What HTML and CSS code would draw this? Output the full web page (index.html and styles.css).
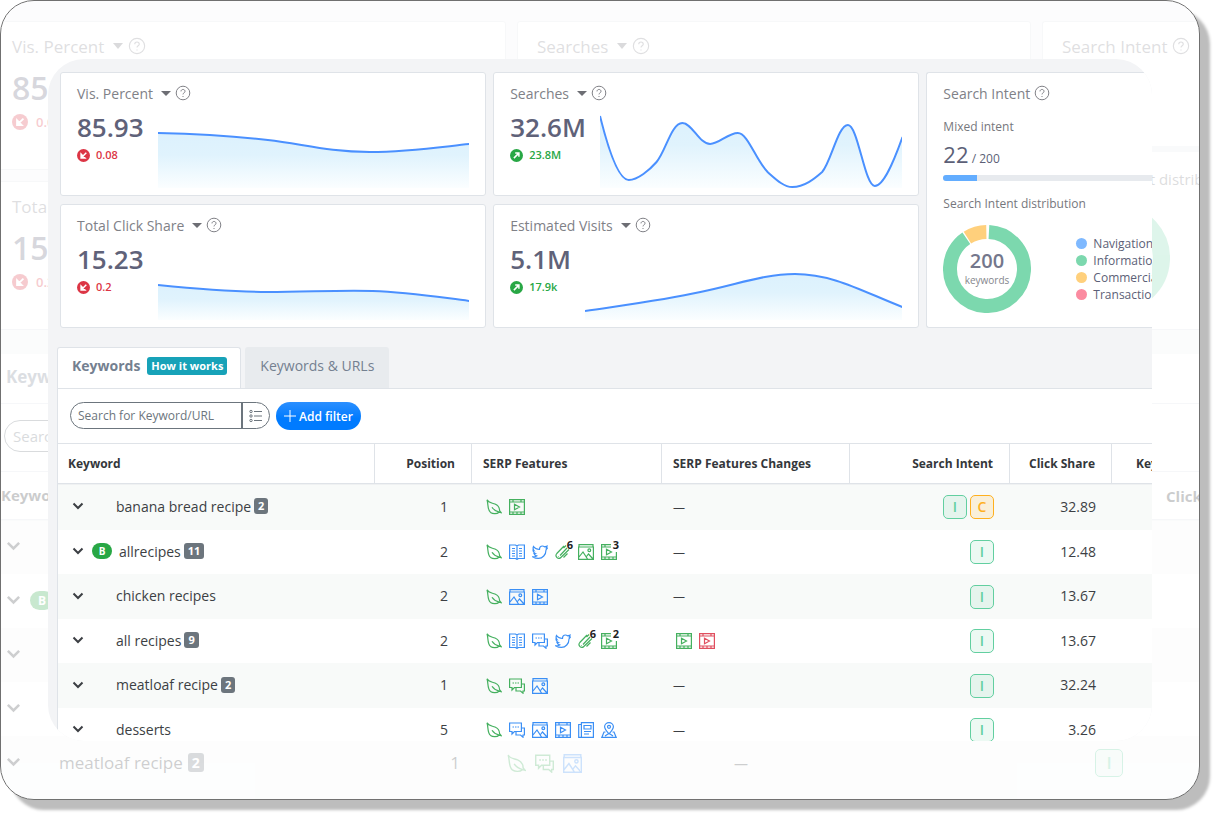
FILE: index.html
```html
<!DOCTYPE html>
<html lang="en">
<head>
    <meta charset="UTF-8">
    <meta name="viewport" content="width=device-width, initial-scale=1.0">
    <title>Keywords</title>
    <link rel="stylesheet" href="styles.css">
</head>
<body>
    <!-- Icon sprite -->
    <svg class="sprite" aria-hidden="true">
        <defs>
            <linearGradient id="area" x1="0" y1="0" x2="0" y2="1">
                <stop offset="0" stop-color="#dcf1fd"/>
                <stop offset="0.4" stop-color="#e0f3fd"/>
                <stop offset="1" stop-color="#fbfeff"/>
            </linearGradient>
        </defs>
        <symbol id="help" viewBox="0 0 16 16"><circle cx="8" cy="8" r="6.8"/><path d="M6 6.4c0-2.6 4-2.6 4 0 0 1.500-2 1.400-2 3M8 11v1"/></symbol>
        <symbol id="down" viewBox="0 0 14 14"><circle cx="7" cy="7" r="7" fill="currentColor" stroke="none"/><path d="M10 4L6 8M4.400 5.500v4.100h4.100z" stroke="#fff" stroke-width="1.600" fill="#fff"/></symbol>
        <symbol id="up" viewBox="0 0 14 14"><circle cx="7" cy="7" r="7" fill="currentColor" stroke="none"/><path d="M4.200 9.800L9 5M5.600 4.400h4v4" stroke="#fff" stroke-width="1.600"/></symbol>
        <symbol id="chevron" viewBox="0 0 12 8"><path d="M1.500 1.500L6 6l4.500-4.500" stroke-width="2"/></symbol>
        <symbol id="list" viewBox="0 0 14 14"><path d="M5 2.500h8M5 7h8M5 11.500h8"/><circle cx="2" cy="2.500" r="1.200"/><circle cx="2" cy="7" r="1.200"/><circle cx="2" cy="11.500" r="1.200"/></symbol>
        <symbol id="leaf" viewBox="0 0 16 16"><path d="M1 .8C2.500 4 6 3.800 9 5c3.500 1.400 4.500 4 4.600 6.700l1.600 2-2.200-.5c-2 1.800-6 2-8.500.2C1.200 10.700 2.500 5.500 1 .8zM6 8.300c1.800 2.800 4 4 7.200 4.900"/></symbol>
        <symbol id="video" viewBox="0 0 16 16"><path d="M.6.6h14.800v14.800H.6zM.6 3h14.800M.6 13h14.800M4 .6V3M12 .6V3M4 13v2.400M12 13v2.400M8 13v2.400M5.500 5.200v5.600L10.500 8z"/></symbol>
        <symbol id="videocut" viewBox="0 0 16 16"><path d="M10 .6H.6v14.800h14.800V8M.6 3H10M.6 13h14.800M4 .6V3M4 13v2.400M12 13v2.400M8 13v2.400M5.500 5.200v5.600L10.500 8z"/></symbol>
        <symbol id="book" viewBox="0 0 16 16"><path d="M.6 1h5.900L8 2l1.500-1h5.900v13.500H9.500L8 15.400l-1.500-.9H.6zM8 2v13M3 4.500h3M3 7h3M3 9.500h3M3 12h3M10 4.500h3M10 7h3M10 9.500h3M10 12h3"/></symbol>
        <symbol id="bird" viewBox="0 0 16 16"><path d="M1.500 2.500c1.500 2 3.500 3 6 3 0-2 1-3.500 3-3.500 1 0 1.500.4 2 .8L15 2.200l-.8 1.700 1.200.1-1.400 1.900c0 5-3.500 8.500-7.500 8.500-2.500 0-4-.5-5.500-1.500 1.600 0 2.600-.3 3.600-1C3 11.500 2.300 10.500 2 9.500h1.200C1.500 8.500 1 7.500 1 6.200l1 .3C.8 5 .8 4 1.500 2.500z"/></symbol>
        <symbol id="links" viewBox="0 0 16 16"><path d="M9 2L1.800 9.500c-2.400 3 1.500 6.500 4 4L14 5.500M5 11.500L12 4M3 12.500l.6.300M8.500 13.500l4-4M11 1.500L8.500 4"/></symbol>
        <symbol id="image" viewBox="0 0 16 16"><path d="M.6 3h14.800v12.400H.6zM1 .6h14v2.400H1zM1 13l4-5 4.500 7M8.500 12.500l2-2.500 4.500 5"/><circle cx="11.300" cy="6.200" r="1.400"/></symbol>
        <symbol id="chat" viewBox="0 0 16 16"><path d="M.6 1h11.800v8.500H5.500L3 12V9.500H.6zM12.400 6h3v7H14v2.200L11.500 13H7V9.500M3.500 5h1.500M6 5h1.500M8.500 5H10"/></symbol>
        <symbol id="news" viewBox="0 0 16 16"><path d="M3.400.6h12v14.800h-12zM3.400 2.500H.7v12.900h3M6 3.500h7v3.500H6zM6 9.500h7M6 12h5"/></symbol>
        <symbol id="pin" viewBox="0 0 16 16"><path d="M8 12C5 8.500 3.600 7 3.600 4.800a4.400 4.200 0 0 1 8.800 0C12.400 7 11 8.500 8 12zM4.500 10H3L.8 15.400h14.400L13 10h-1.500M4 14l3-2M9 12l3 2"/><circle cx="8" cy="4.800" r="1.500"/></symbol>
    </svg>

    <div class="frame">
        <!-- Faded copy behind the panel -->
        <div class="backdrop" aria-hidden="true" inert>
            <div class="cards">
                <div class="card">
                    <div class="card-title"><span class="picker">Vis. Percent</span><svg class="help"><use href="#help"/></svg></div>
                    <div class="stats"><div class="value">85.93</div><div class="delta down"><svg><use href="#down"/></svg>0.08</div></div>
                </div>
                <div class="card">
                    <div class="card-title"><span class="picker">Searches</span><svg class="help"><use href="#help"/></svg></div>
                </div>
                <div class="card intent-card">
                    <div class="card-title">Search Intent<svg class="help"><use href="#help"/></svg></div>
                    <div class="label">Mixed intent</div>
                    <div class="mixed"><span class="mixed-count">22</span> / 200</div>
                    <div class="progress"><div class="progress-fill"></div></div>
                    <div class="label">Search Intent distribution</div>
                    <svg class="donut" viewBox="0 0 88 88"><circle class="arc info" cx="44" cy="44" r="37" pathLength="360"/></svg>
                </div>
                <div class="card">
                    <div class="card-title"><span class="picker">Total Click Share</span><svg class="help"><use href="#help"/></svg></div>
                    <div class="stats"><div class="value">15.23</div><div class="delta down"><svg><use href="#down"/></svg>0.2</div></div>
                </div>
                <div class="card"></div>
            </div>
            <div class="keywords">
                <div class="tabs"><span class="tab active">Keywords</span></div>
                <div class="toolbar">
                    <div class="search"><input type="text" aria-label="Search" placeholder="Search for Keyword/URL"></div>
                </div>
                <table class="grid">
                    <colgroup><col><col class="c-position"><col class="c-serp"><col class="c-changes"><col class="c-intent"><col class="c-share"></colgroup>
                    <thead>
                        <tr><th>Keyword</th><th></th><th></th><th></th><th></th><th class="cut">Click Share</th></tr>
                    </thead>
                    <tbody>
                        <tr><td><div class="kw"><svg class="chev"><use href="#chevron"/></svg></div></td><td></td><td></td><td></td><td></td><td></td></tr>
                        <tr><td><div class="kw"><svg class="chev"><use href="#chevron"/></svg><span class="brand">B</span></div></td><td></td><td></td><td></td><td></td><td></td></tr>
                        <tr><td><div class="kw"><svg class="chev"><use href="#chevron"/></svg></div></td><td></td><td></td><td></td><td></td><td></td></tr>
                        <tr><td><div class="kw"><svg class="chev"><use href="#chevron"/></svg></div></td><td></td><td></td><td></td><td></td><td></td></tr>
                        <tr>
                            <td><div class="kw"><svg class="chev"><use href="#chevron"/></svg><span class="name">meatloaf recipe</span><span class="count">2</span></div></td>
                            <td class="num pos">1</td>
                            <td><div class="icons"><svg class="green"><use href="#leaf"/></svg><svg class="green"><use href="#chat"/></svg><svg class="blue"><use href="#image"/></svg></div></td>
                            <td class="dash">—</td>
                            <td><div class="intents"><span class="intent">I</span></div></td>
                            <td></td>
                        </tr>
                    </tbody>
                </table>
            </div>
        </div>

        <main class="panel">
            <section class="cards">
                <div class="card">
                    <div class="card-title"><button class="picker">Vis. Percent</button><svg class="help"><use href="#help"/></svg></div>
                    <div class="card-body">
                        <div class="stats"><div class="value">85.93</div><div class="delta down"><svg><use href="#down"/></svg>0.08</div></div>
                        <svg class="chart" viewBox="0 0 312 78" preserveAspectRatio="none">
                            <path class="fill" d="M0 23C40 24 75 26 110 30S170 42 212 42S290 36 312 34V78H0z"/>
                            <path class="line" d="M0 23C40 24 75 26 110 30S170 42 212 42S290 36 312 34"/>
                        </svg>
                    </div>
                </div>
                <div class="card">
                    <div class="card-title"><button class="picker">Searches</button><svg class="help"><use href="#help"/></svg></div>
                    <div class="card-body">
                        <div class="stats"><div class="value">32.6M</div><div class="delta up"><svg><use href="#up"/></svg>23.8M</div></div>
                        <svg class="chart" viewBox="0 0 305 78" preserveAspectRatio="none">
                            <path class="fill" d="M0 6C8 38 18 70 29 70C38 70 50 60 57 52C66 42 72 13 83 13C93 13 100 34 111 34C120 34 129 23 139 23C149 23 157 50 169 62C177 69 185 77 194 77C206 77 216 69 224 62C233 52 240 15 250 15C260 15 267 76 277 76C286 76 296 52 305 27V78H0z"/>
                            <path class="line" d="M0 6C8 38 18 70 29 70C38 70 50 60 57 52C66 42 72 13 83 13C93 13 100 34 111 34C120 34 129 23 139 23C149 23 157 50 169 62C177 69 185 77 194 77C206 77 216 69 224 62C233 52 240 15 250 15C260 15 267 76 277 76C286 76 296 52 305 27"/>
                        </svg>
                    </div>
                </div>
                <div class="card intent-card">
                    <div class="card-title">Search Intent<svg class="help"><use href="#help"/></svg></div>
                    <div class="label">Mixed intent</div>
                    <div class="mixed"><span class="mixed-count">22</span> / 200</div>
                    <div class="progress"><div class="progress-fill"></div></div>
                    <div class="label">Search Intent distribution</div>
                    <div class="distribution">
                        <svg class="donut" viewBox="0 0 88 88">
                            <circle class="arc info" cx="44" cy="44" r="37" pathLength="360"/>
                            <circle class="arc comm" cx="44" cy="44" r="37" pathLength="360"/>
                            <text class="donut-total" x="44" y="43">200</text>
                            <text class="donut-label" x="44" y="59">keywords</text>
                        </svg>
                        <ul class="legend">
                            <li class="navi">Navigational</li>
                            <li class="info">Informational</li>
                            <li class="comm">Commercial</li>
                            <li class="tran">Transactional</li>
                        </ul>
                    </div>
                </div>
                <div class="card">
                    <div class="card-title"><button class="picker">Total Click Share</button><svg class="help"><use href="#help"/></svg></div>
                    <div class="card-body">
                        <div class="stats"><div class="value">15.23</div><div class="delta down"><svg><use href="#down"/></svg>0.2</div></div>
                        <svg class="chart" viewBox="0 0 312 78" preserveAspectRatio="none">
                            <path class="fill" d="M0 43C30 46 70 50 110 50C150 50 180 48 215 49C250 50 280 55 312 59V78H0z"/>
                            <path class="line" d="M0 43C30 46 70 50 110 50C150 50 180 48 215 49C250 50 280 55 312 59"/>
                        </svg>
                    </div>
                </div>
                <div class="card">
                    <div class="card-title"><button class="picker">Estimated Visits</button><svg class="help"><use href="#help"/></svg></div>
                    <div class="card-body">
                        <div class="stats"><div class="value">5.1M</div><div class="delta up"><svg><use href="#up"/></svg>17.9k</div></div>
                        <svg class="chart" viewBox="0 0 319 78" preserveAspectRatio="none">
                            <path class="fill" d="M0 69C40 63 80 58 116 50C155 42 180 32 211 32C250 32 280 50 319 65V78H0z"/>
                            <path class="line" d="M0 69C40 63 80 58 116 50C155 42 180 32 211 32C250 32 280 50 319 65"/>
                        </svg>
                    </div>
                </div>
            </section>

            <section class="keywords">
                <div class="tabs">
                    <a href="#keywords" class="tab active">Keywords<span class="tag">How it works</span></a>
                    <a href="#urls" class="tab">Keywords &amp; URLs</a>
                </div>
                <div class="toolbar">
                    <div class="search">
                        <input type="text" aria-label="Search for Keyword/URL" placeholder="Search for Keyword/URL">
                        <button aria-label="Search list"><svg><use href="#list"/></svg></button>
                    </div>
                    <button class="add"><svg viewBox="0 0 12 12"><path d="M6 0v12M0 6h12"/></svg>Add filter</button>
                </div>
                <table class="grid">
                    <colgroup><col><col class="c-position"><col class="c-serp"><col class="c-changes"><col class="c-intent"><col class="c-share"><col class="c-last"></colgroup>
                    <thead>
                        <tr>
                            <th>Keyword</th>
                            <th class="num">Position</th>
                            <th>SERP Features</th>
                            <th>SERP Features Changes</th>
                            <th class="num">Search Intent</th>
                            <th class="num">Click Share</th>
                            <th class="cut">Keyword</th>
                        </tr>
                    </thead>
                    <tbody>
                        <tr>
                            <td><div class="kw"><button class="toggle" aria-label="Expand"><svg class="chev"><use href="#chevron"/></svg></button><span class="name">banana bread recipe</span><span class="count">2</span></div></td>
                            <td class="num pos">1</td>
                            <td><div class="icons"><svg class="green"><use href="#leaf"/></svg><svg class="green"><use href="#video"/></svg></div></td>
                            <td class="dash">—</td>
                            <td><div class="intents"><span class="intent">I</span><span class="intent commercial">C</span></div></td>
                            <td class="num">32.89</td>
                            <td></td>
                        </tr>
                        <tr>
                            <td><div class="kw"><button class="toggle" aria-label="Expand"><svg class="chev"><use href="#chevron"/></svg></button><span class="brand">B</span><span class="name">allrecipes</span><span class="count">11</span></div></td>
                            <td class="num pos">2</td>
                            <td><div class="icons"><svg class="green"><use href="#leaf"/></svg><svg class="blue"><use href="#book"/></svg><svg class="blue"><use href="#bird"/></svg><span class="multi"><svg class="green"><use href="#links"/></svg><b>6</b></span><svg class="green"><use href="#image"/></svg><span class="multi"><svg class="green"><use href="#videocut"/></svg><b>3</b></span></div></td>
                            <td class="dash">—</td>
                            <td><div class="intents"><span class="intent">I</span></div></td>
                            <td class="num">12.48</td>
                            <td></td>
                        </tr>
                        <tr>
                            <td><div class="kw"><button class="toggle" aria-label="Expand"><svg class="chev"><use href="#chevron"/></svg></button><span class="name">chicken recipes</span></div></td>
                            <td class="num pos">2</td>
                            <td><div class="icons"><svg class="green"><use href="#leaf"/></svg><svg class="blue"><use href="#image"/></svg><svg class="blue"><use href="#video"/></svg></div></td>
                            <td class="dash">—</td>
                            <td><div class="intents"><span class="intent">I</span></div></td>
                            <td class="num">13.67</td>
                            <td></td>
                        </tr>
                        <tr>
                            <td><div class="kw"><button class="toggle" aria-label="Expand"><svg class="chev"><use href="#chevron"/></svg></button><span class="name">all recipes</span><span class="count">9</span></div></td>
                            <td class="num pos">2</td>
                            <td><div class="icons"><svg class="green"><use href="#leaf"/></svg><svg class="blue"><use href="#book"/></svg><svg class="blue"><use href="#chat"/></svg><svg class="blue"><use href="#bird"/></svg><span class="multi"><svg class="green"><use href="#links"/></svg><b>6</b></span><span class="multi"><svg class="green"><use href="#videocut"/></svg><b>2</b></span></div></td>
                            <td><div class="icons"><svg class="green"><use href="#video"/></svg><svg class="red"><use href="#video"/></svg></div></td>
                            <td><div class="intents"><span class="intent">I</span></div></td>
                            <td class="num">13.67</td>
                            <td></td>
                        </tr>
                        <tr>
                            <td><div class="kw"><button class="toggle" aria-label="Expand"><svg class="chev"><use href="#chevron"/></svg></button><span class="name">meatloaf recipe</span><span class="count">2</span></div></td>
                            <td class="num pos">1</td>
                            <td><div class="icons"><svg class="green"><use href="#leaf"/></svg><svg class="green"><use href="#chat"/></svg><svg class="blue"><use href="#image"/></svg></div></td>
                            <td class="dash">—</td>
                            <td><div class="intents"><span class="intent">I</span></div></td>
                            <td class="num">32.24</td>
                            <td></td>
                        </tr>
                        <tr>
                            <td><div class="kw"><button class="toggle" aria-label="Expand"><svg class="chev"><use href="#chevron"/></svg></button><span class="name">desserts</span></div></td>
                            <td class="num pos">5</td>
                            <td><div class="icons"><svg class="green"><use href="#leaf"/></svg><svg class="blue"><use href="#chat"/></svg><svg class="blue"><use href="#image"/></svg><svg class="blue"><use href="#video"/></svg><svg class="blue"><use href="#news"/></svg><svg class="blue"><use href="#pin"/></svg></div></td>
                            <td class="dash">—</td>
                            <td><div class="intents"><span class="intent">I</span></div></td>
                            <td class="num">3.26</td>
                            <td></td>
                        </tr>
                    </tbody>
                </table>
            </section>
        </main>
    </div>
</body>
</html>
```
FILE: styles.css
```css
* {
    box-sizing: border-box;
}

body {
    display: grid;
    grid-template-columns: minmax(0, 1fr);
    grid-template-rows: minmax(0, 1fr);
    height: 100vh;
    margin: 0;
    padding: 0 14px 14px 0;
    background-color: #fff;
    font-family: "Open Sans", "Noto Sans", sans-serif;
    font-size: 14px;
    color: #3c3f44;
}

svg {
    fill: none;
    stroke: currentColor;
    flex: none;
}

button {
    font: inherit;
    color: inherit;
    background: none;
    border: 0;
    padding: 0;
    cursor: pointer;
}

.sprite {
    position: absolute;
    width: 0;
    height: 0;
}

/* backdrop and panel share the one grid cell */
.frame {
    display: grid;
    grid-template-columns: minmax(0, 1fr);
    grid-template-rows: minmax(0, 1fr);
    border: 1px solid #707070;
    border-radius: 34px;
    box-shadow: 10px 10px 3px #bdbdbd;
    background-color: #fff;
    overflow: hidden;
}

.backdrop,
.panel {
    grid-area: 1 / 1;
    background-color: #f3f4f6;
    overflow: hidden;
}

.panel {
    position: relative;
    margin: 58px 47px;
    padding-top: 13px;
    border-radius: 36px;
}

/* Cards */
.cards {
    display: grid;
    grid-template-columns: 17fr 17fr 9fr;
    grid-auto-rows: 124px;
    gap: 8px 7px;
    margin-left: 12px;
}

.card {
    padding: 9px 16px 0;
    background-color: #fff;
    border: 1px solid #dfe3e8;
    border-radius: 3px;
    min-width: 0;
}

.card-title {
    display: flex;
    align-items: center;
    gap: 4px;
    height: 22px;
    font-weight: 500;
    color: #808187;
    white-space: nowrap;
}

.picker {
    display: flex;
    align-items: center;
}

.picker::after {
    content: "";
    margin-left: 8px;
    border: 5px solid transparent;
    border-top: 5px solid #6d6e74;
    border-bottom: 0;
}

.help {
    width: 16px;
    height: 16px;
}

.card-body {
    display: flex;
    gap: 14px;
}

.stats {
    padding-top: 5px;
}

.value {
    font-size: 26px;
    font-weight: 600;
    line-height: 36px;
    color: #5f6279;
}

.delta {
    display: flex;
    align-items: center;
    gap: 6px;
    font-size: 11px;
    font-weight: 600;
    line-height: 20px;
}

.delta svg {
    width: 13px;
    height: 13px;
}

.delta.down {
    color: #dc3545;
}

.delta.up {
    color: #28a745;
}

.chart {
    flex: 1;
    min-width: 0;
    height: 78px;
    margin-top: 6px;
}

.chart .fill {
    fill: url(#area);
    stroke: none;
}

.chart .line {
    stroke: #4a90ff;
    stroke-width: 2;
    vector-effect: non-scaling-stroke;
}

.intent-card {
    grid-column: 3;
    grid-row: 1 / 3;
    padding-right: 0;
    border-right: 0;
    border-radius: 3px 0 0 3px;
    white-space: nowrap;
}

.intent-card .card-title {
    margin-bottom: 1px;
}

.label {
    margin-top: 14px;
    font-size: 12px;
    line-height: 18px;
    color: #76777d;
}

.mixed {
    margin-top: 5px;
    font-size: 12px;
    line-height: 26px;
    color: #5c5f77;
}

.mixed-count {
    font-size: 22px;
}

.progress {
    height: 6px;
    margin-top: 3px;
    background-color: #e7eaee;
    border-radius: 3px 0 0 3px;
    overflow: hidden;
}

.progress-fill {
    width: 16%;
    height: 100%;
    background-color: #63adff;
}

.distribution {
    display: flex;
    align-items: center;
    gap: 45px;
    margin-top: 12px;
}

.donut {
    width: 88px;
    height: 88px;
}

.arc {
    stroke-width: 14;
    transform-origin: center;
}

.arc.info {
    stroke: #7cd8ae;
    stroke-dasharray: 323 37;
    transform: rotate(-87deg);
}

.arc.comm {
    stroke: #ffd07c;
    stroke-dasharray: 31 329;
    transform: rotate(-122deg);
}

.donut-total,
.donut-label {
    text-anchor: middle;
    stroke: none;
}

.donut-total {
    font-size: 20px;
    font-weight: 600;
    fill: #74778c;
}

.donut-label {
    font-size: 10px;
    fill: #85868c;
}

.legend {
    list-style: none;
    margin: 0;
    padding: 0;
    font-size: 12px;
    line-height: 17px;
    color: #5c5f77;
}

.legend li {
    display: flex;
    align-items: center;
    gap: 6px;
}

.legend li::before {
    content: "";
    width: 11px;
    height: 11px;
    border-radius: 50%;
    background-color: #7fb9ff;
}

.legend .info::before {
    background-color: #7cd8ae;
}

.legend .comm::before {
    background-color: #ffd07c;
}

.legend .tran::before {
    background-color: #fb8ba0;
}

/* Tabs */
.keywords {
    margin: 19px 0 0 9px;
}

.tabs {
    display: flex;
    gap: 4px;
    height: 41px;
}

.tab {
    display: flex;
    align-items: center;
    gap: 7px;
    padding: 0 15px 5px;
    color: #748090;
    background-color: #e8ebee;
    border-radius: 3px 3px 0 0;
    text-decoration: none;
}

.tab.active {
    padding: 0 13px 5px 14px;
    font-weight: 700;
    background-color: #fff;
    border: 1px solid #dfe3e8;
    border-bottom: 0;
}

.tag {
    padding: 0 4px;
    font-size: 11px;
    font-weight: 700;
    line-height: 18px;
    color: #fff;
    background-color: #17a2b8;
    border-radius: 3px;
}

/* Toolbar */
.toolbar {
    display: flex;
    align-items: flex-start;
    gap: 6px;
    height: 55px;
    padding: 13px 12px 0;
    background-color: #fff;
    border-top: 1px solid #dfe3e8;
    border-left: 1px solid #dfe3e8;
}

.search {
    display: flex;
    width: 200px;
    height: 27px;
    border: 1px solid #6c757d;
    border-radius: 14px;
    overflow: hidden;
}

.search input {
    flex: 1;
    min-width: 0;
    padding: 0 7px;
    font: inherit;
    font-size: 12px;
    border: 0;
    background: none;
}

.search input::placeholder {
    color: #6c757d;
    opacity: 1;
}

.search button {
    display: flex;
    align-items: center;
    justify-content: center;
    width: 28px;
    border-left: 2px solid #6c757d;
    color: #6c757d;
}

.search svg {
    width: 14px;
    height: 14px;
}

.add {
    display: flex;
    align-items: center;
    gap: 3px;
    height: 28px;
    padding: 0 8px;
    font-size: 12px;
    font-weight: 600;
    color: #fff;
    background: linear-gradient(#2b8fff, #007bff 60%);
    border-radius: 14px;
}

.add svg {
    width: 12px;
    height: 12px;
}

/* Table */
.grid {
    width: 100%;
    table-layout: fixed;
    border-collapse: separate;
    border-spacing: 0;
    background-color: #fff;
    border-left: 1px solid #dfe3e8;
}

.c-position {
    width: 97px;
}

.c-serp {
    width: 190px;
}

.c-changes {
    width: 188px;
}

.c-intent {
    width: 160px;
}

.c-share {
    width: 102px;
}

.c-last {
    width: 40px;
}

.grid th {
    height: 41px;
    padding: 0 12px 1px 11px;
    font-size: 12px;
    font-weight: 700;
    text-align: left;
    color: #34373b;
    border-top: 1px solid #dfe3e8;
    border-bottom: 1px solid #dfe3e8;
    border-right: 1px solid #dfe3e8;
    white-space: nowrap;
}

.grid th:first-child {
    padding-left: 10px;
}

.grid th:last-child {
    border-right: 0;
}

.grid td {
    height: 45px;
    padding: 0;
    white-space: nowrap;
}

.grid tbody tr:nth-child(even) td {
    height: 44px;
}

.grid tbody tr:first-child td {
    height: 46px;
    box-shadow: inset 0 1px 0 #eff1f2;
}

.grid tbody tr:nth-child(odd) {
    background-color: #f8faf9;
}

.grid th.num,
.grid td.num {
    padding-right: 16px;
    text-align: right;
}

.grid td.num {
    padding-bottom: 2px;
}

.grid td.pos {
    padding-right: 24px;
}

.grid th.cut {
    padding: 0 0 0 24px;
    overflow: hidden;
}

.grid td.dash {
    padding-left: 11px;
    font-size: 12px;
}

.kw {
    display: flex;
    align-items: center;
    padding: 0 0 2px 14px;
}

.toggle {
    display: flex;
}

.chev {
    width: 12px;
    height: 8px;
}

.name {
    margin-left: 32px;
}

.brand {
    width: 20px;
    margin-left: 8px;
    font-size: 10px;
    font-weight: 700;
    line-height: 16px;
    text-align: center;
    color: #fff;
    background-color: #28a745;
    border-radius: 8px;
}

.brand + .name {
    margin-left: 7px;
}

.count {
    margin-left: 3px;
    padding: 0 4px;
    font-size: 11px;
    font-weight: 700;
    line-height: 16px;
    color: #fff;
    background-color: #6c757d;
    border-radius: 3px;
}

.icons {
    display: flex;
    gap: 7px;
    padding-left: 14px;
}

.icons svg {
    display: block;
    width: 16px;
    height: 16px;
    stroke-width: 1.2;
}

.multi {
    position: relative;
}

.multi b {
    position: absolute;
    top: -5px;
    right: -2px;
    font-size: 11px;
    line-height: 12px;
    color: #222;
}

.green {
    color: #45b05f;
}

.blue {
    color: #3b8ff5;
}

.red {
    color: #e04f5f;
}

.intents {
    display: flex;
    justify-content: flex-end;
    gap: 3px;
    padding-right: 16px;
}

.intent {
    width: 24px;
    font-size: 14px;
    font-weight: 600;
    line-height: 22px;
    text-align: center;
    color: #62cfa0;
    background-color: #62cfa01f;
    border: 1px solid #62cfa0;
    border-radius: 5px;
}

.intent.commercial {
    color: #ffb01f;
    background-color: #ffb01f24;
    border-color: #ffb01f;
}

/* Backdrop: the same parts, larger and faded */
.backdrop {
    opacity: 0.25;
    padding-top: 20px;
}

.backdrop .cards {
    grid-template-columns: 36fr 36fr 11fr;
    grid-auto-rows: 149px;
    gap: 11px;
    margin-left: -9px;
}

.backdrop .card {
    padding: 11px 0 0 19px;
}

.backdrop .card-title {
    gap: 5px;
    height: 26px;
    font-size: 17px;
}

.backdrop .picker::after {
    margin-left: 9px;
    border-width: 6px 5px 0;
}

.backdrop .help {
    width: 18px;
    height: 18px;
}

.backdrop .stats {
    padding-top: 7px;
}

.backdrop .value {
    font-size: 32px;
    line-height: 44px;
}

.backdrop .delta {
    gap: 8px;
    font-size: 13px;
    line-height: 24px;
}

.backdrop .delta svg {
    width: 16px;
    height: 16px;
}

.backdrop .label {
    margin-top: 16px;
    font-size: 15px;
    line-height: 22px;
}

.backdrop .mixed {
    line-height: 32px;
}

.backdrop .progress {
    margin-top: 7px;
}

.backdrop .donut {
    width: 108px;
    height: 108px;
    margin-top: 14px;
}

.backdrop .keywords {
    margin: 24px 0 0;
}

.backdrop .tabs {
    height: 49px;
    background-color: #fff;
}

.backdrop .tab.active {
    padding: 0 5px 5px;
    font-size: 17px;
    border: 0;
}

.backdrop .toolbar {
    height: 68px;
    padding: 16px 3px 0;
    border-left: 0;
}

.backdrop .search {
    height: 32px;
    border-radius: 16px;
}

.backdrop .search input {
    padding: 0 8px;
    font-size: 15px;
}

.backdrop .grid {
    border-left: 0;
}

.backdrop .c-position {
    width: 118px;
}

.backdrop .c-serp {
    width: 227px;
}

.backdrop .c-changes {
    width: 230px;
}

.backdrop .c-intent {
    width: 193px;
}

.backdrop .c-share {
    width: 60px;
}

.backdrop .grid th {
    height: 49px;
    padding-left: 0;
    font-size: 15px;
    border-right: 0;
}

.backdrop .grid th.cut {
    padding-left: 27px;
}

.backdrop .grid tbody tr td {
    height: 54px;
    font-size: 17px;
}

.backdrop .grid td.pos {
    padding-right: 29px;
}

.backdrop .grid tbody tr td.dash {
    padding-left: 18px;
    font-size: 14px;
}

.backdrop .kw {
    padding-left: 5px;
}

.backdrop .chev {
    width: 15px;
    height: 10px;
}

.backdrop .brand {
    width: 24px;
    margin-left: 9px;
    font-size: 12px;
    line-height: 19px;
    border-radius: 10px;
}

.backdrop .name {
    margin-left: 38px;
}

.backdrop .count {
    margin-left: 5px;
    font-size: 14px;
    line-height: 19px;
}

.backdrop .icons {
    gap: 9px;
    padding-left: 18px;
}

.backdrop .icons svg {
    width: 19px;
    height: 19px;
}

.backdrop .intent {
    width: 28px;
    font-size: 17px;
    line-height: 26px;
}
```
